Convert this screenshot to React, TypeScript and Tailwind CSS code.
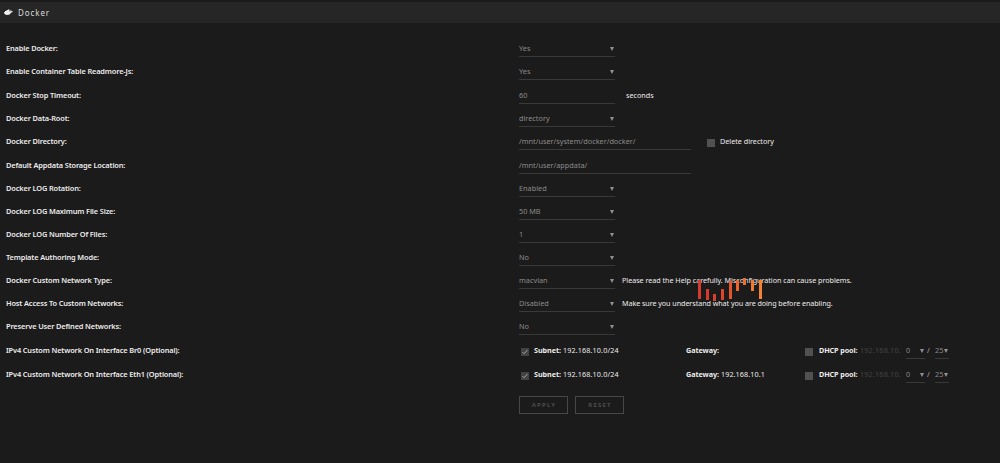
import type { ReactNode } from "react";

const bars = [
  "left-[698px] top-[280px] h-[19px] bg-[#d8392e]",
  "left-[706px] top-[289px] h-[11px] bg-[#d8392e]",
  "left-[713px] top-[294px] h-[7px] bg-[#d8402e]",
  "left-[721px] top-[289px] h-[11px] bg-[#de452c]",
  "left-[729px] top-[281px] h-[18px] bg-[#e4552c]",
  "left-[736px] top-[280px] h-[11px] bg-[#ea652b]",
  "left-[743px] top-[278px] h-[7px] bg-[#ee6f2b]",
  "left-[751px] top-[280px] h-[11px] bg-[#f07a2e]",
  "left-[759px] top-[280px] h-[19px] bg-[#f18333]",
];

function Row({ label, height = "h-[23px]", children }: { label: string; height?: string; children: ReactNode }) {
  return (
    <div className={`flex items-end ${height}`}>
      <div className="w-[519px] shrink-0 pl-[6px] pb-[1px] text-[7.4px] font-semibold tracking-[-0.14px]">{label}</div>
      {children}
    </div>
  );
}

function Field({ value, arrow = true, width = "w-[96px]" }: { value: string; arrow?: boolean; width?: string }) {
  return (
    <div className={`flex h-[16px] shrink-0 items-start justify-between border-b border-[#3a3939] text-[7.3px] text-[#8b8a8a] ${width}`}>
      <span>{value}</span>
      {arrow && <Arrow />}
    </div>
  );
}

function Arrow() {
  return (
    <svg className="mt-[6px] mr-[1px] h-[4px] w-[4px] shrink-0" viewBox="0 0 4 4" fill="#929191">
      <path d="M0 0H4L2 4Z" />
    </svg>
  );
}

function Box({ checked = false }: { checked?: boolean }) {
  return (
    <span className={`mb-[3px] flex h-[8px] w-[8px] shrink-0 items-center justify-center ${checked ? "bg-[#444343]" : "bg-[#525151]"}`}>
      {checked && (
        <svg className="h-[6px] w-[6px]" viewBox="0 0 6 6" fill="none" stroke="#a09f9f" strokeWidth="1">
          <path d="M.5 3L2.2 4.8L5.5 1" />
        </svg>
      )}
    </span>
  );
}

function Note({ children, className = "" }: { children: ReactNode; className?: string }) {
  return <span className={`pb-[1px] ${className}`}>{children}</span>;
}

function Network({ label, gateway }: { label: string; gateway: string }) {
  return (
    <Row label={label} height="h-[24px]">
      <div className="ml-[2px] flex w-[165px] items-end">
        <Box checked />
        <Note className="ml-[5px] tracking-[0.14px]"><b className="tracking-[-0.05px]">Subnet:</b> 192.168.10.0/24</Note>
      </div>
      <div className="flex w-[119px] items-end">
        <Note className="tracking-[0.1px]"><b className="tracking-[-0.05px]">Gateway:</b> {gateway}</Note>
      </div>
      <Box />
      <Note className="ml-[6px] w-[41px] font-bold tracking-[-0.1px]">DHCP pool:</Note>
      <Note className="w-[46px] tracking-[0.2px] text-[#444343]">192.168.10.</Note>
      <Field value="0" width="w-[19px]" />
      <Note className="w-[10px] pl-[2px] text-[#b0afaf]">/</Note>
      <Field value="25" width="w-[14px]" />
    </Row>
  );
}

function Button({ children }: { children: string }) {
  return (
    <button className="flex h-[18px] w-[49px] items-center justify-center border border-[#484747] pl-[1px] text-[6px] font-bold leading-[8px] tracking-[1.2px] text-[#4d4c4c]">
      {children}
    </button>
  );
}

export default function App() {
  return (
    <main className="relative h-[463px] w-[1000px] overflow-hidden bg-[#1c1b1b] font-['Noto_Sans',sans-serif] text-[7.2px] leading-[15px] whitespace-nowrap text-[#ecebeb]">
      <header className="mt-[2px] flex h-[21px] items-center bg-[#262626] pl-[4px] text-[8px] tracking-[0.9px] text-[#dddcdc]">
        <svg className="h-[7px] w-[9px]" viewBox="0 0 18 14" fill="#eeeeee">
          <path d="M0 6H2V4H5V2H8V1H11V5H13Q12 3 13 2Q15 3 15 4.7Q17 4.2 18 5Q17 7 14.5 7Q12 12 6.5 12Q0 12 0 6Z" />
        </svg>
        <h1 className="ml-[5px]">Docker</h1>
      </header>
      <section className="pt-[11px]">
        <Row label="Enable Docker:"><Field value="Yes" /></Row>
        <Row label="Enable Container Table Readmore-Js:"><Field value="Yes" /></Row>
        <Row label="Docker Stop Timeout:" height="h-[24px]">
          <Field value="60" arrow={false} />
          <Note className="ml-[11px]">seconds</Note>
        </Row>
        <Row label="Docker Data-Root:"><Field value="directory" /></Row>
        <Row label="Docker Directory:">
          <Field value="/mnt/user/system/docker/docker/" arrow={false} width="w-[172px]" />
          <span className="ml-[16px] flex items-end">
            <Box />
            <Note className="ml-[5px]">Delete directory</Note>
          </span>
        </Row>
        <Row label="Default Appdata Storage Location:" height="h-[24px]">
          <Field value="/mnt/user/appdata/" arrow={false} width="w-[172px]" />
        </Row>
        <Row label="Docker LOG Rotation:"><Field value="Enabled" /></Row>
        <Row label="Docker LOG Maximum File Size:"><Field value="50 MB" /></Row>
        <Row label="Docker LOG Number Of Files:"><Field value="1" /></Row>
        <Row label="Template Authoring Mode:"><Field value="No" /></Row>
        <Row label="Docker Custom Network Type:">
          <Field value="macvlan" />
          <Note className="ml-[7px] tracking-[-0.03px]">Please read the Help carefully. Misconfiguration can cause problems.</Note>
        </Row>
        <Row label="Host Access To Custom Networks:">
          <Field value="Disabled" />
          <Note className="ml-[7px] tracking-[-0.07px]">Make sure you understand what you are doing before enabling.</Note>
        </Row>
        <Row label="Preserve User Defined Networks:"><Field value="No" /></Row>
        <Network label="IPv4 Custom Network On Interface Br0 (Optional):" gateway="" />
        <Network label="IPv4 Custom Network On Interface Eth1 (Optional):" gateway="192.168.10.1" />
      </section>
      <div className="mt-[13px] ml-[519px] flex gap-[7px]">
        <Button>APPLY</Button>
        <Button>RESET</Button>
      </div>
      {bars.map((bar) => (
        <span key={bar} className={`absolute w-[3px] ${bar}`} />
      ))}
    </main>
  );
}
